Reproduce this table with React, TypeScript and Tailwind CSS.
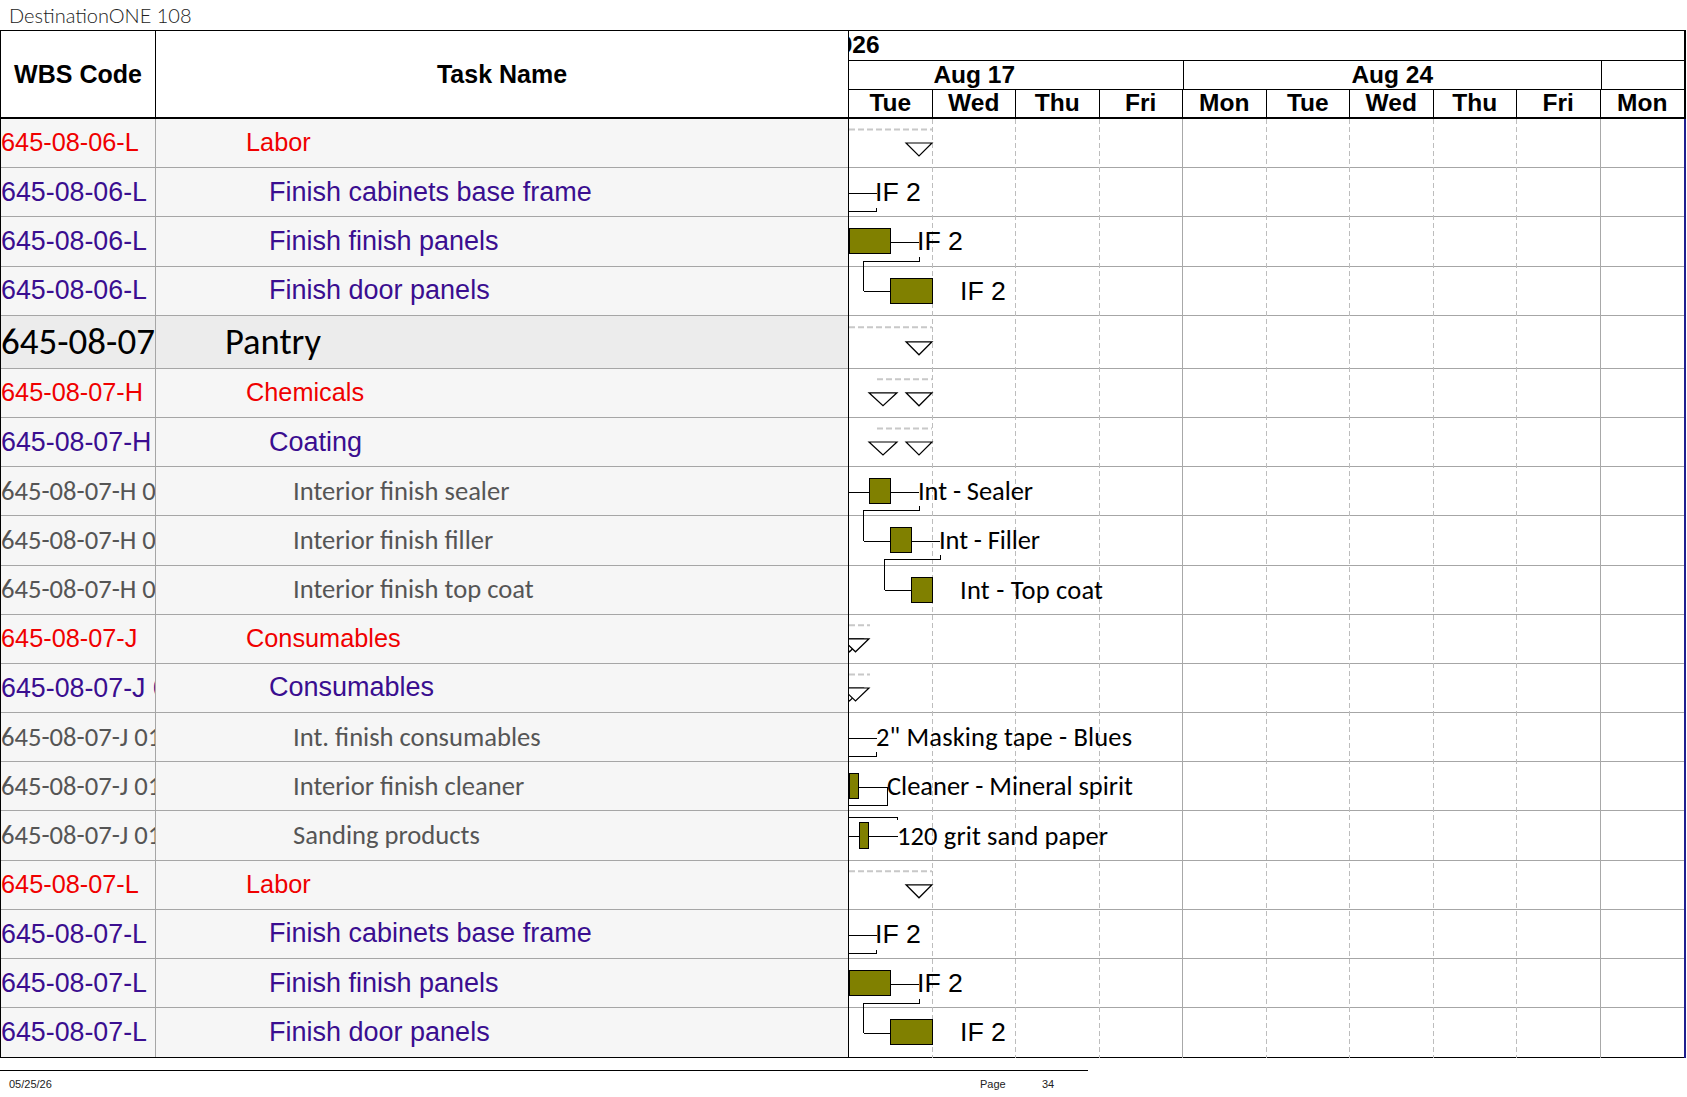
import React from 'react';

type Kind = 'red' | 'purple' | 'gray' | 'pantry';
type ChartType =
  | 'sum1' | 'ifA' | 'ifB' | 'ifC' | 'sumP' | 'sum2'
  | 'seal' | 'fill' | 'top' | 'sumC' | 'mask' | 'clean' | 'sand';

interface Row { wbs: string; name: string; kind: Kind; chart: ChartType }

const rows: Row[] = [
  { wbs: '645-08-06-L', name: 'Labor', kind: 'red', chart: 'sum1' },
  { wbs: '645-08-06-L', name: 'Finish cabinets base frame', kind: 'purple', chart: 'ifA' },
  { wbs: '645-08-06-L', name: 'Finish finish panels', kind: 'purple', chart: 'ifB' },
  { wbs: '645-08-06-L', name: 'Finish door panels', kind: 'purple', chart: 'ifC' },
  { wbs: '645-08-07', name: 'Pantry', kind: 'pantry', chart: 'sumP' },
  { wbs: '645-08-07-H', name: 'Chemicals', kind: 'red', chart: 'sum2' },
  { wbs: '645-08-07-H', name: 'Coating', kind: 'purple', chart: 'sum2' },
  { wbs: '645-08-07-H 01', name: 'Interior finish sealer', kind: 'gray', chart: 'seal' },
  { wbs: '645-08-07-H 02', name: 'Interior finish filler', kind: 'gray', chart: 'fill' },
  { wbs: '645-08-07-H 03', name: 'Interior finish top coat', kind: 'gray', chart: 'top' },
  { wbs: '645-08-07-J', name: 'Consumables', kind: 'red', chart: 'sumC' },
  { wbs: '645-08-07-J 01', name: 'Consumables', kind: 'purple', chart: 'sumC' },
  { wbs: '645-08-07-J 01 01', name: 'Int. finish consumables', kind: 'gray', chart: 'mask' },
  { wbs: '645-08-07-J 01 02', name: 'Interior finish cleaner', kind: 'gray', chart: 'clean' },
  { wbs: '645-08-07-J 01 03', name: 'Sanding products', kind: 'gray', chart: 'sand' },
  { wbs: '645-08-07-L', name: 'Labor', kind: 'red', chart: 'sum1' },
  { wbs: '645-08-07-L', name: 'Finish cabinets base frame', kind: 'purple', chart: 'ifA' },
  { wbs: '645-08-07-L', name: 'Finish finish panels', kind: 'purple', chart: 'ifB' },
  { wbs: '645-08-07-L', name: 'Finish door panels', kind: 'purple', chart: 'ifC' },
];

const ROW_H = 49.2;
const PANTRY_H = 53;
const BODY_TOP = 119;
const DAY_W = 83.5;

const ARIAL = "'Liberation Sans', Arial, sans-serif";
const CAL = "Carlito, Lato, sans-serif";

const rowTops: number[] = [];
let acc = BODY_TOP;
rows.forEach((r) => {
  rowTops.push(acc);
  acc += r.kind === 'pantry' ? PANTRY_H : ROW_H;
});
const BODY_H = acc - BODY_TOP;

function wbsClass(k: Kind): string {
  switch (k) {
    case 'red':
      return "font-['Liberation_Sans',Arial,sans-serif] text-[25.3px] text-[#f00000]";
    case 'purple':
      return "font-['Liberation_Sans',Arial,sans-serif] text-[26.8px] text-[#3a0e90]";
    case 'gray':
      return "font-['Carlito','Lato',sans-serif] text-[26.6px] text-[#555555]";
    default:
      return "font-['Carlito','Lato',sans-serif] text-[37px] text-black";
  }
}

function nameClass(k: Kind): string {
  switch (k) {
    case 'red':
      return "pl-[90px] font-['Liberation_Sans',Arial,sans-serif] text-[25.3px] text-[#f00000]";
    case 'purple':
      return "pl-[113px] font-['Liberation_Sans',Arial,sans-serif] text-[27px] text-[#3a0e90]";
    case 'gray':
      return "pl-[137px] font-['Carlito','Lato',sans-serif] text-[26.6px] text-[#555555]";
    default:
      return "pl-[69px] font-['Carlito','Lato',sans-serif] text-[36.5px] text-black";
  }
}

const H = ({ x1, x2, y }: { x1: number; x2: number; y: number }) => (
  <line x1={x1} y1={y} x2={x2} y2={y} stroke="#000" strokeWidth={1} shapeRendering="crispEdges" />
);

const Bar = ({ x1, x2, y1, y2 }: { x1: number; x2: number; y1: number; y2: number }) => (
  <rect x={x1 + 0.5} y={y1 + 0.5} width={x2 - x1 - 1} height={y2 - y1 - 1} fill="#808000" stroke="#000" strokeWidth={1} shapeRendering="crispEdges" />
);

const Tri = ({ x1, x2, y }: { x1: number; x2: number; y: number }) => (
  <polygon points={`${x1},${y} ${x2},${y} ${(x1 + x2) / 2},${y + 13}`} fill="#fff" stroke="#000" strokeWidth={1.2} />
);

const Dash = ({ x1, x2, y }: { x1: number; x2: number; y: number }) => (
  <line x1={x1} y1={y} x2={x2} y2={y} stroke="#c8c8c8" strokeWidth={2} strokeDasharray="6 3" />
);

const Conn = ({ pts }: { pts: [number, number][] }) => (
  <polyline points={pts.map((p) => p.join(',')).join(' ')} fill="none" stroke="#000" strokeWidth={1} shapeRendering="crispEdges" />
);

const ArialText = ({ x, y, children }: { x: number; y: number; children: React.ReactNode }) => (
  <text x={x} y={y} fontFamily={ARIAL} fontSize={26.7} fill="#000">{children}</text>
);

const CalText = ({ x, y, len, children }: { x: number; y: number; len: number; children: React.ReactNode }) => (
  <text x={x} y={y} fontFamily={CAL} fontSize={26.5} fill="#000" textLength={len} lengthAdjust="spacing">{children}</text>
);

function chartFor(type: ChartType, t: number, nt: number, key: number) {
  const r = (y: number) => Math.round(y) + 0.5;
  const mid = r(t + 24.5);
  const nmid = r(nt + 24.5);
  const base = t + 33;
  switch (type) {
    case 'sum1':
      return (
        <g key={key}>
          <Dash x1={849} x2={932} y={t + 10.5} />
          <Tri x1={906} x2={932} y={t + 24} />
        </g>
      );
    case 'sumP':
      return (
        <g key={key}>
          <Dash x1={849} x2={932} y={t + 11.5} />
          <Tri x1={906} x2={932} y={t + 26} />
        </g>
      );
    case 'sum2':
      return (
        <g key={key}>
          <Dash x1={877} x2={932} y={t + 10.5} />
          <Tri x1={869} x2={897} y={t + 24} />
          <Tri x1={906} x2={932} y={t + 24} />
        </g>
      );
    case 'sumC':
      return (
        <g key={key}>
          <Dash x1={849} x2={870} y={t + 10.5} />
          <Tri x1={836} x2={863} y={t + 24} />
          <Tri x1={842} x2={869} y={t + 24} />
        </g>
      );
    case 'ifA':
      return (
        <g key={key}>
          <H x1={849} x2={877} y={mid} />
          <ArialText x={875} y={base}>IF 2</ArialText>
          <Conn pts={[[849, r(t + 43)], [876.5, r(t + 43)], [876.5, r(t + 39.5)]]} />
        </g>
      );
    case 'ifB':
      return (
        <g key={key}>
          <Bar x1={849} x2={891} y1={Math.round(t + 11)} y2={Math.round(t + 37)} />
          <H x1={890} x2={919} y={mid} />
          <ArialText x={917} y={base}>IF 2</ArialText>
          <Conn pts={[[919.5, r(t + 40)], [919.5, r(t + 43.5)], [863.5, r(t + 43.5)], [863.5, nmid], [890, nmid]]} />
        </g>
      );
    case 'ifC':
      return (
        <g key={key}>
          <Bar x1={890} x2={933} y1={Math.round(t + 11)} y2={Math.round(t + 37)} />
          <ArialText x={960} y={base}>IF 2</ArialText>
        </g>
      );
    case 'seal':
      return (
        <g key={key}>
          <H x1={849} x2={869} y={mid} />
          <Bar x1={869} x2={891} y1={Math.round(t + 11)} y2={Math.round(t + 37)} />
          <H x1={890} x2={919} y={mid} />
          <CalText x={918} y={base} len={115}>Int - Sealer</CalText>
          <Conn pts={[[919.5, r(t + 39)], [919.5, r(t + 42.5)], [863.5, r(t + 42.5)], [863.5, nmid], [890, nmid]]} />
        </g>
      );
    case 'fill':
      return (
        <g key={key}>
          <Bar x1={890} x2={912} y1={Math.round(t + 11)} y2={Math.round(t + 37)} />
          <H x1={911} x2={940} y={mid} />
          <CalText x={939} y={base} len={101}>Int - Filler</CalText>
          <Conn pts={[[940.5, r(t + 39)], [940.5, r(t + 42.5)], [884.5, r(t + 42.5)], [884.5, nmid], [911, nmid]]} />
        </g>
      );
    case 'top':
      return (
        <g key={key}>
          <Bar x1={911} x2={933} y1={Math.round(t + 11)} y2={Math.round(t + 37)} />
          <CalText x={960} y={base} len={143}>Int - Top coat</CalText>
        </g>
      );
    case 'mask':
      return (
        <g key={key}>
          <H x1={849} x2={877} y={mid} />
          <CalText x={876} y={base} len={256}>2" Masking tape - Blues</CalText>
          <Conn pts={[[849, r(t + 42.5)], [876.5, r(t + 42.5)], [876.5, r(t + 39)]]} />
        </g>
      );
    case 'clean':
      return (
        <g key={key}>
          <Bar x1={849} x2={859} y1={Math.round(t + 11)} y2={Math.round(t + 37)} />
          <H x1={858} x2={887} y={mid} />
          <CalText x={887} y={base} len={246}>Cleaner - Mineral spirit</CalText>
          <Conn pts={[[887.5, mid], [887.5, r(t + 43)], [849, r(t + 43)]]} />
        </g>
      );
    case 'sand':
      return (
        <g key={key}>
          <Conn pts={[[849, r(t + 5)], [897.5, r(t + 5)], [897.5, r(t + 8.5)]]} />
          <H x1={849} x2={859} y={mid} />
          <Bar x1={859} x2={869} y1={Math.round(t + 10)} y2={Math.round(t + 37)} />
          <H x1={868} x2={898} y={mid} />
          <CalText x={897} y={base} len={211}>120 grit sand paper</CalText>
        </g>
      );
  }
}

function ChartOverlay() {
  const grid = [];
  for (let k = 1; k <= 9; k++) {
    const x = Math.round(849 + DAY_W * k) - 0.5;
    const solid = k === 4 || k === 9;
    grid.push(
      <line
        key={k}
        x1={x}
        y1={BODY_TOP}
        x2={x}
        y2={BODY_TOP + BODY_H}
        stroke={solid ? '#a8a8a8' : '#bdbdbd'}
        strokeWidth={1}
        strokeDasharray={solid ? undefined : '5 3'}
        shapeRendering="crispEdges"
      />
    );
  }
  return (
    <svg
      className="absolute left-[847px] top-0 pointer-events-none"
      width={838}
      height={BODY_H}
      viewBox={`848 ${BODY_TOP} 838 ${BODY_H}`}
    >
      {grid}
      {rows.map((row, i) =>
        chartFor(row.chart, rowTops[i], i + 1 < rows.length ? rowTops[i + 1] : rowTops[i] + ROW_H, i)
      )}
      <line x1={848.5} y1={BODY_TOP} x2={848.5} y2={BODY_TOP + BODY_H} stroke="#000" strokeWidth={1} shapeRendering="crispEdges" />
      <line x1={1685} y1={BODY_TOP} x2={1685} y2={BODY_TOP + BODY_H} stroke="#1f1f8f" strokeWidth={2} shapeRendering="crispEdges" />
    </svg>
  );
}

const days = ['Tue', 'Wed', 'Thu', 'Fri', 'Mon', 'Tue', 'Wed', 'Thu', 'Fri', 'Mon'];

export default function App() {
  return (
    <div className="w-[1687px] h-[1097px] bg-white overflow-hidden font-['Liberation_Sans',Arial,sans-serif] text-black">
      <div className="h-[30px] pl-[9px] flex items-center font-['Lato',sans-serif] font-light text-[20px] text-[#222222] leading-none">
        DestinationONE 108
      </div>

      <div className="w-[1686px] border-t border-l border-black">
        {/* Header */}
        <div className="flex border-b-2 border-black">
          <div className="w-[155px] h-[86px] shrink-0 border-r border-black flex items-center justify-center font-bold text-[25px] leading-none">
            WBS Code
          </div>
          <div className="w-[692px] h-[86px] shrink-0 flex items-center justify-center font-bold text-[25px] leading-none">
            Task Name
          </div>
          <div className="w-[838px] h-[86px] shrink-0 border-l border-black border-r-2 flex flex-col font-bold text-[24.5px] leading-none">
            <div className="h-[30px] border-b border-black flex items-center overflow-hidden">
              <span className="ml-[-24px]">2026</span>
            </div>
            <div className="h-[29px] border-b border-black flex overflow-hidden">
              <div className="w-[417.5px] shrink-0 ml-[-83.5px] flex items-center justify-center">Aug 17</div>
              <div className="w-[417.5px] shrink-0 border-l border-black flex items-center justify-center">Aug 24</div>
              <div className="flex-1 border-l border-black" />
            </div>
            <div className="h-[27px] grid grid-cols-10">
              {days.map((d, i) => (
                <div
                  key={i}
                  className={i < 9 ? 'border-r border-black flex items-center justify-center' : 'flex items-center justify-center'}
                >
                  {d}
                </div>
              ))}
            </div>
          </div>
        </div>

        {/* Body */}
        <div className="relative border-b border-black">
          {rows.map((row, i) => {
            const last = i === rows.length - 1;
            const isP = row.kind === 'pantry';
            const hCls = isP ? 'h-[53px]' : 'h-[49.2px]';
            const bg = isP ? 'bg-[#ececec]' : 'bg-[#f6f6f6]';
            return (
              <div key={i} className={`flex ${hCls} ${last ? '' : 'border-b border-[#a6a6a6]'}`}>
                <div className={`w-[155px] shrink-0 border-r border-[#a6a6a6] ${bg} flex items-center overflow-hidden whitespace-nowrap leading-none ${wbsClass(row.kind)}`}>
                  {row.wbs}
                </div>
                <div className={`w-[692px] shrink-0 ${bg} flex items-center whitespace-nowrap leading-none ${nameClass(row.kind)}`}>
                  {row.name}
                </div>
                <div className="w-[838px] shrink-0 bg-white" />
              </div>
            );
          })}
          <ChartOverlay />
        </div>
      </div>

      {/* Footer */}
      <div className="mt-[12px] w-[1088px] border-t border-black h-[28px] flex items-center text-[11px] leading-none text-[#222222]">
        <span className="w-[980px] shrink-0 pl-[9px]">05/25/26</span>
        <span className="w-[62px] shrink-0">Page</span>
        <span>34</span>
      </div>
    </div>
  );
}
